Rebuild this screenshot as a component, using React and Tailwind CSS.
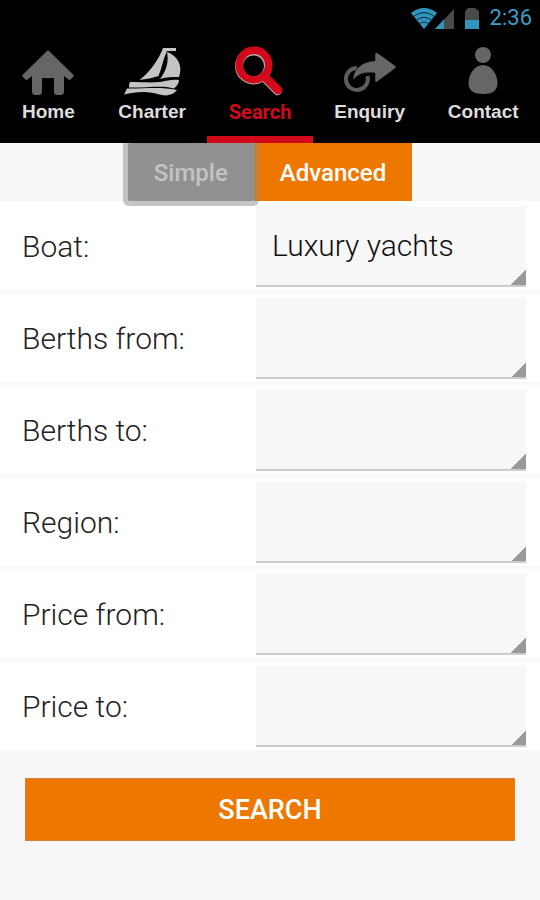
import { useState } from "react"
import clsx from "clsx"

const HomeIcon = () => (
  <svg viewBox="0 0 54 50" className="h-[50px] w-[54px]" fill="#666666">
    <path d="M27 4 L52.500 29 Q53 30 52 31 L49.500 33.500 Q48.500 34 47.500 33.500 L43 30 V45.500 Q43 49 39.500 49 H36 Q33 49 33 45.500 V32 H21 V45.500 Q21 49 17.500 49 H14.500 Q11 49 11 45.500 V30 L6.500 33.500 Q5.500 34 4.500 33.500 L2 31 Q1 30 1.500 29 Z" />
  </svg>
)

const CharterIcon = () => (
  <svg viewBox="0 0 60 50" className="h-[50px] w-[60px]" fill="#c4c4c4">
    {/* Mast and mainsail */}
    <path d="M41 2 L54 2 V5 H45 C41 13 40 22 36.500 30 C31 32 24 33 17.500 34 C28 26 37 13 41 2 Z" />
    <path d="M45 6 C56 10 61 20 57 31 C51 31 44 31 38 33 C44 25 47 16 45 6 Z" />
    {/* Hull */}
    <path d="M8 36 C20 36 29 37 38 36 C45 35 50 33 57 34 C57 37 55 40 52 42.500 C40 39 24 42 7 41.500 C7 39 7 38 8 36 Z" />
    <path d="M5 42.500 C20 43 38 40 55 44 C53 47 49 49 44 49.500 C37 49 31 46 22 46 C14 46 8 47 2 48.500 Z" />
  </svg>
)

const SearchIcon = () => (
  <svg viewBox="0 0 52 52" className="h-[52px] w-[52px]" fill="none" strokeLinecap="round">
    <circle cx="19.500" cy="20" r="14.500" stroke="#b8a5a5" strokeWidth="8" />
    <path d="M31.500 33 L43.500 45" stroke="#b8a5a5" strokeWidth="8.500" />
    <circle cx="20" cy="19" r="14.800" stroke="#d2091b" strokeWidth="7.500" />
    <path d="M32 32 L44 44" stroke="#d2091b" strokeWidth="8.500" />
  </svg>
)

const EnquiryIcon = () => (
  <svg viewBox="0 0 54 50" className="h-[50px] w-[54px]">
    <path d="M14 22 A11 11 0 1 0 24.500 30" fill="none" stroke="#5c5c5c" strokeWidth="4" />
    <path d="M32 8 Q32 5.500 34.500 7 L52 19.500 Q54 21 52 22.500 L34.500 35.500 Q32 37 32 34.500 V27 C23 26 16 27 10 34 C10 23 20 15 32 15 Z" fill="#666666" stroke="#000000" strokeWidth="0.500" />
  </svg>
)

const ContactIcon = () => (
  <svg viewBox="0 0 34 50" className="h-[50px] w-[34px]" fill="#666666">
    <circle cx="17" cy="9" r="8" />
    <path d="M17 19 C25 19 31.500 28 31.500 37 C31.500 45 26 48 17 48 C8 48 2.500 45 2.500 37 C2.500 28 9 19 17 19 Z" />
  </svg>
)

const navItems = [
  { name: "Home", icon: HomeIcon },
  { name: "Charter", icon: CharterIcon },
  { name: "Search", icon: SearchIcon },
  { name: "Enquiry", icon: EnquiryIcon },
  { name: "Contact", icon: ContactIcon },
]

const fields = [
  { id: "boat", label: "Boat:", options: ["Luxury yachts"] },
  { id: "berths-from", label: "Berths from:", options: [""] },
  { id: "berths-to", label: "Berths to:", options: [""] },
  { id: "region", label: "Region:", options: [""] },
  { id: "price-from", label: "Price from:", options: [""] },
  { id: "price-to", label: "Price to:", options: [""] },
]

const StatusBar = () => (
  <div className="flex h-9 items-center justify-end pr-2 text-[#3a9dc6]">
    <svg viewBox="0 0 72 22" className="mr-2 h-[22px] w-[72px]" fill="none">
      {/* Wifi */}
      <path d="M1 6 Q14 -4 27 6 L14 22 Z" fill="#3196bf" />
      <path d="M3 10 Q14 1 25 10 M6 13.500 Q14 7 22 13.500 M9 17 Q14 13 19 17" stroke="#0b2a37" strokeWidth="1" />
      {/* Signal */}
      <path d="M44 2 V22 H25 Z" fill="#4a4a4a" />
      <path d="M34 12.500 V22 H25 Z" fill="#3196bf" />
      {/* Battery */}
      <path d="M55 4 L58 1 H65 L69 4 V22 H55 Z" fill="#4a4a4a" />
      <path d="M55 13 H69 V22 H55 Z" fill="#3196bf" />
    </svg>
    <span className="text-[22px] leading-6">2:36</span>
  </div>
)

const SearchPage = () => {
  const [activeNav, setActiveNav] = useState("Search")
  const [activeTab, setActiveTab] = useState("Advanced")

  return (
    <div className="min-h-screen bg-[#f7f7f7] font-['Roboto',sans-serif]">
      <header className="relative z-10 bg-black">
        <StatusBar />
        <nav className="flex">
          {navItems.map((item) => (
            <a
              key={item.name}
              href="#"
              onClick={() => setActiveNav(item.name)}
              className={clsx(
                "flex h-[107px] flex-auto flex-col items-center border-b-[7px] pt-2.5 leading-6 font-bold",
                activeNav === item.name ? "border-[#d2091b] text-[20px] text-[#d2091b]" : "border-black font-['Liberation_Sans',sans-serif] text-[19px] text-[#dddddd]"
              )}
            >
              <span className="flex h-[54px] items-start">
                <item.icon />
              </span>
              {item.name}
            </a>
          ))}
        </nav>
      </header>

      {/* Simple / Advanced switch */}
      <div className="flex h-[58px] justify-center">
        {["Simple", "Advanced"].map((tab) => (
          <button
            key={tab}
            type="button"
            onClick={() => setActiveTab(tab)}
            className={clsx(
              "px-[26px] pt-0.5 text-2xl font-medium",
              activeTab === tab ? "bg-[#ee7700] text-white" : "relative rounded-xs bg-[#919191] text-[#c4c4c4] shadow-[0_0_0_5px_rgba(140,140,140,0.5)]"
            )}
          >
            {tab}
          </button>
        ))}
      </div>

      <form onSubmit={(e) => e.preventDefault()}>
        <div className="bg-white">
          {fields.map((field) => (
            <div key={field.id} className="flex items-center border-b-[3px] border-[#f8f8f8] pt-[5px] pr-3.5 pb-[3px] pl-[22px] last:border-b-0">
              <label htmlFor={field.id} className="flex-1 text-[30px] font-light text-[#222222]">
                {field.label}
              </label>
              <select
                id={field.id}
                className="h-[81px] w-[270px] appearance-none border-b-2 border-[#cccccc] bg-[#f7f7f7] bg-[linear-gradient(135deg,transparent_50%,#999999_50%)] bg-[length:15px_15px] bg-right-bottom bg-no-repeat px-4 text-[30px] font-light text-[#111111]"
              >
                {field.options.map((option) => (
                  <option key={option}>{option}</option>
                ))}
              </select>
            </div>
          ))}
        </div>

        <div className="px-[25px] pt-7 pb-8">
          <button type="submit" className="h-[63px] w-full border border-[#d98236] bg-[#ee7700] pt-0.5 text-[27px] font-medium text-white">
            SEARCH
          </button>
        </div>
      </form>
    </div>
  )
}

export default SearchPage
